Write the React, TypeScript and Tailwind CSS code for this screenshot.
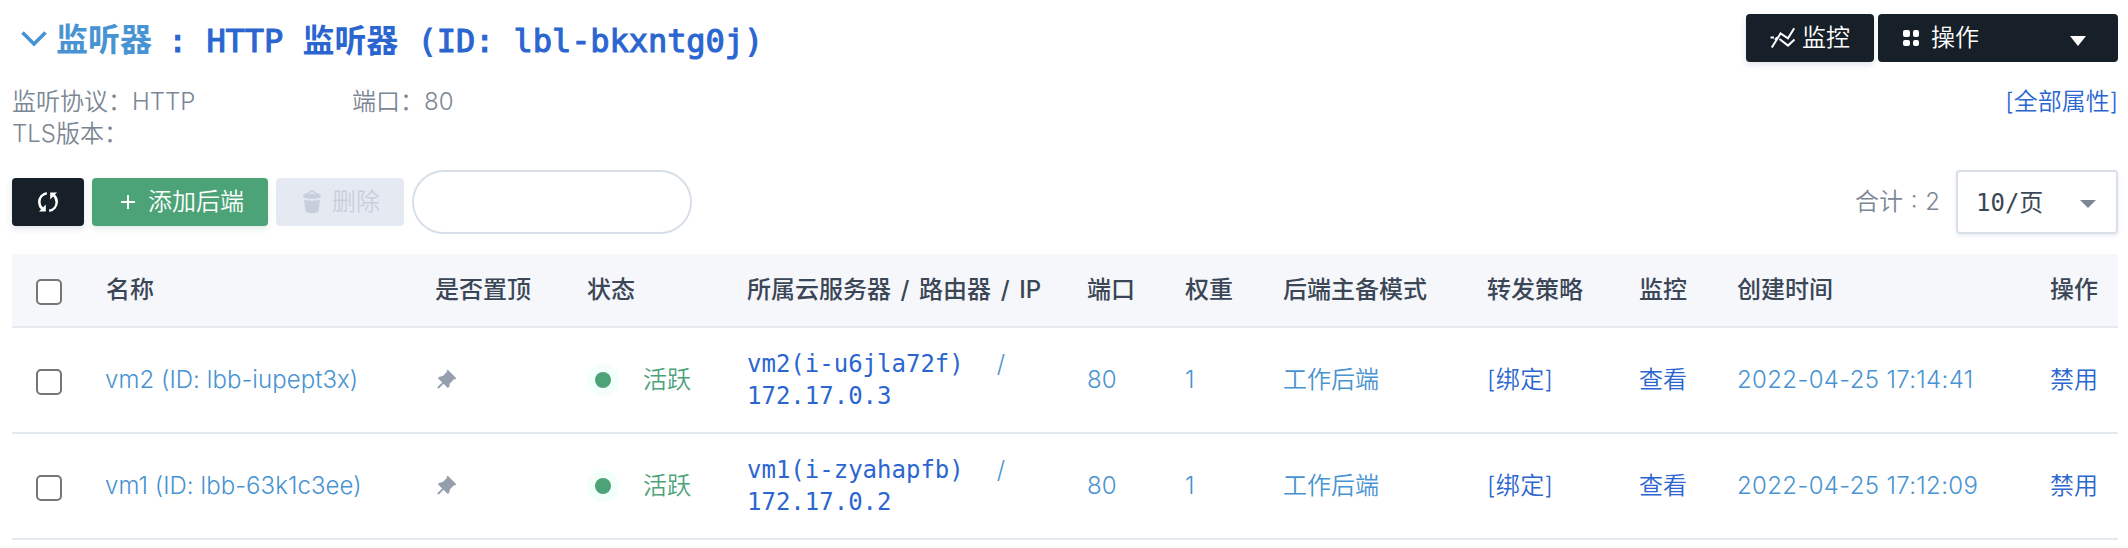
import React from "react";
import { RiPushpinFill } from "react-icons/ri";

type Backend = {
  name: string;
  host: string;
  ip: string;
  port: string;
  weight: string;
  created: string;
};

const backends: Backend[] = [
  { name: "vm2 (ID: lbb-iupept3x)", host: "vm2(i-u6jla72f)", ip: "172.17.0.3", port: "80", weight: "1", created: "2022-04-25 17:14:41" },
  { name: "vm1 (ID: lbb-63k1c3ee)", host: "vm1(i-zyahapfb)", ip: "172.17.0.2", port: "80", weight: "1", created: "2022-04-25 17:12:09" },
];

const headers = ["名称", "是否置顶", "状态", "所属云服务器 / 路由器 / IP", "端口", "权重", "后端主备模式", "转发策略", "监控", "创建时间", "操作"];

const columns = "grid grid-cols-[70px_329px_152px_160px_340px_98px_98px_204px_152px_98px_313px_1fr] pl-6 items-center";
const mono = "font-['DejaVu_Sans_Mono','Noto_Sans_CJK_SC',monospace]";

function ChartIcon() {
  return (
    <svg width="26" height="24" viewBox="0 0 26 24" fill="none" stroke="currentColor" strokeWidth="2">
      <path d="M1.800 21.500 10.500 7.500l7.500 4.800 6.200-10" />
      <path d="M9.500 13l8.500 6.600 6.500-6" />
      <path d="M.500 11.500h3.500" />
      <path d="M7 11.200l-2.200 2.600" strokeWidth="1.500" />
    </svg>
  );
}

function RefreshIcon() {
  return (
    <svg width="22" height="22" viewBox="0 0 22 22">
      <path d="M9.800 2.200C5.200 3 2.300 6.700 2.300 11c0 3 1.400 5.600 3.400 7.200" fill="none" stroke="currentColor" strokeWidth="2.500" />
      <path d="M12.200 19.800c4.600-.8 7.500-4.500 7.500-8.800 0-3-1.400-5.600-3.400-7.200" fill="none" stroke="currentColor" strokeWidth="2.500" />
      <path d="M2 20.500h6.800v-7zM20 1.500h-6.800v7z" fill="currentColor" />
    </svg>
  );
}

function TrashIcon() {
  return (
    <svg width="20" height="24" viewBox="0 0 20 24" fill="currentColor">
      <path d="M1 6.800C1 4.500 4 3.100 6.500 2.500 7.500 1.200 8.700.6 10 .6s2.500.6 3.500 1.900C16 3.100 19 4.500 19 6.800 16 9.500 4 9.500 1 6.800zM6.500 5.400 10 3l3.500 2.400-1-2.200C11 2 9 2 7.500 3.200z" fillRule="evenodd" />
      <path d="M2 9.500c4 1.600 12 1.600 16 0l-1.500 12c-2.500 2.400-10.500 2.400-13 0z" />
    </svg>
  );
}

function Checkbox() {
  return <span className="mt-[3px] block size-[26px] rounded-[5px] border-2 border-[#767676] bg-white" />;
}

function Row({ item }: { item: Backend }) {
  return (
    <div className={`${columns} h-[106px] border-b-2 border-[#e4e9f0]`}>
      <Checkbox />
      <span className="-ml-px tracking-[0.06px]">{item.name}</span>
      <RiPushpinFill className="-ml-px size-[24px] text-[#959eac]" />
      <span className="flex items-center text-[#4da378]">
        <span className="flex size-8 items-center justify-center rounded-full bg-[#f3fffb]">
          <span className="size-4 rounded-full bg-[#4da378]" />
        </span>
        <span className="ml-6">活跃</span>
      </span>
      <div className="leading-8">
        <div className="flex h-8">
          <span className={`${mono} font-normal text-[#2b66d0]`}>{item.host}</span>
          <span className="ml-[33px]">/</span>
        </div>
        <div className={`${mono} h-8 font-normal text-[#2b66d0]`}>{item.ip}</div>
      </div>
      <span>{item.port}</span>
      <span>{item.weight}</span>
      <span>工作后端</span>
      <span className="tracking-[0.4px] text-[#2b66d0]">[绑定]</span>
      <span className="text-[#2b66d0]">查看</span>
      <span className="tracking-[0.35px]">{item.created}</span>
      <span className="text-[#2b66d0]">禁用</span>
    </div>
  );
}

export default function App() {
  return (
    <main className="h-[548px] w-[2128px] overflow-hidden bg-white pl-3 pr-[10px] pt-[14px] font-['Inter','Noto_Sans_CJK_SC',sans-serif] text-[24px] font-[350] leading-8 text-[#7c8794]">
      <header className="flex h-12 justify-between">
        <h1 className="flex h-12 items-center text-[32px] font-semibold text-[#4893d1]">
          <svg className="ml-[9px] mr-[9px]" width="26" height="18" viewBox="0 0 26 18" fill="none" stroke="currentColor" strokeWidth="3.600">
            <path d="M1.500 3.500 13 15 24.500 3.500" />
          </svg>
          <span className="mt-1 w-[112px]">监听器</span>
          <span className={`${mono} mt-[5px] flex items-baseline whitespace-pre tracking-[-0.06px] text-[#2b66d0]`}>
            <span className="font-normal [-webkit-text-stroke:1.1px]">: HTTP </span>
            <span>监听器</span>
            <span className="font-normal [-webkit-text-stroke:1.1px]"> (ID: lbl-bkxntg0j)</span>
          </span>
        </h1>
        <div className="flex gap-1 text-white">
          <button className="flex h-12 w-32 items-center rounded bg-[#171f29] pl-6 shadow-[0_3px_6px_rgba(60,80,140,0.15)]">
            <ChartIcon />
            <span className="ml-[6px]">监控</span>
          </button>
          <button className="flex h-12 w-60 items-center rounded bg-[#171f29] pl-[25px]">
            <span className="grid grid-cols-2 gap-[3px]">
              <i className="size-[6.5px] rounded-[2px] bg-white" />
              <i className="size-[6.5px] rounded-[2px] bg-white" />
              <i className="size-[6.5px] rounded-[2px] bg-white" />
              <i className="size-[6.5px] rounded-[2px] bg-white" />
            </span>
            <span className="ml-3">操作</span>
            <svg className="ml-auto mr-8 mt-[5px]" width="16" height="10" viewBox="0 0 16 10" fill="currentColor"><path d="M0 0h16L8 10z" /></svg>
          </button>
        </div>
      </header>

      <section className="mt-6 flex h-[84px] items-start">
        <div className="w-[340px]">
          <div>监听协议：HTTP</div>
          <div>TLS版本：</div>
        </div>
        <div>端口：80</div>
        <a className="ml-auto text-[#2b66d0]">[全部属性]</a>
      </section>

      <section className="flex h-16 items-center">
        <button className="flex h-12 w-[72px] items-center justify-center rounded bg-[#171f29] text-white shadow-[0_3px_6px_rgba(60,80,140,0.15)]">
          <RefreshIcon />
        </button>
        <button className="ml-2 flex h-12 w-44 items-center rounded bg-[#4da378] pl-[29px] text-white shadow-[0_3px_6px_rgba(60,140,100,0.15)]">
          <svg width="14" height="14" viewBox="0 0 14 14" stroke="currentColor" strokeWidth="2"><path d="M7 0v14M0 7h14" /></svg>
          <span className="ml-[13px]">添加后端</span>
        </button>
        <button className="ml-2 flex h-12 w-32 items-center rounded bg-[#e5e9f2] pl-[26px] text-[#c8cfdc]">
          <TrashIcon />
          <span className="ml-[10px]">删除</span>
        </button>
        <input className="ml-2 h-16 w-[280px] rounded-full border-2 border-[#d8dfe9] bg-white px-6 outline-none" />
        <span className="ml-auto whitespace-pre [word-spacing:1px]">合计 : 2</span>
        <div className={`${mono} ml-4 flex h-16 w-[162px] items-center rounded border-2 border-[#d8dfe9] pl-[18px] font-normal text-[#3b4656] shadow-[0_2px_4px_rgba(60,80,140,0.10)]`}>
          <span className="mt-px">10/页</span>
          <svg className="ml-auto mr-5 mt-[3px] text-[#7c8794]" width="16" height="8" viewBox="0 0 16 8" fill="currentColor"><path d="M0 0h16L8 8z" /></svg>
        </div>
      </section>

      <section className="mt-5 text-[#4893d1]">
        <div className={`${columns} h-[74px] border-b-2 border-[#e4e9f0] bg-[#f5f7fb] font-medium text-[#3b4656]`}>
          <Checkbox />
          {headers.map((h) => (
            <span key={h} className="whitespace-pre [word-spacing:3.2px]">{h}</span>
          ))}
        </div>
        {backends.map((b) => (
          <Row key={b.host} item={b} />
        ))}
      </section>
    </main>
  );
}
